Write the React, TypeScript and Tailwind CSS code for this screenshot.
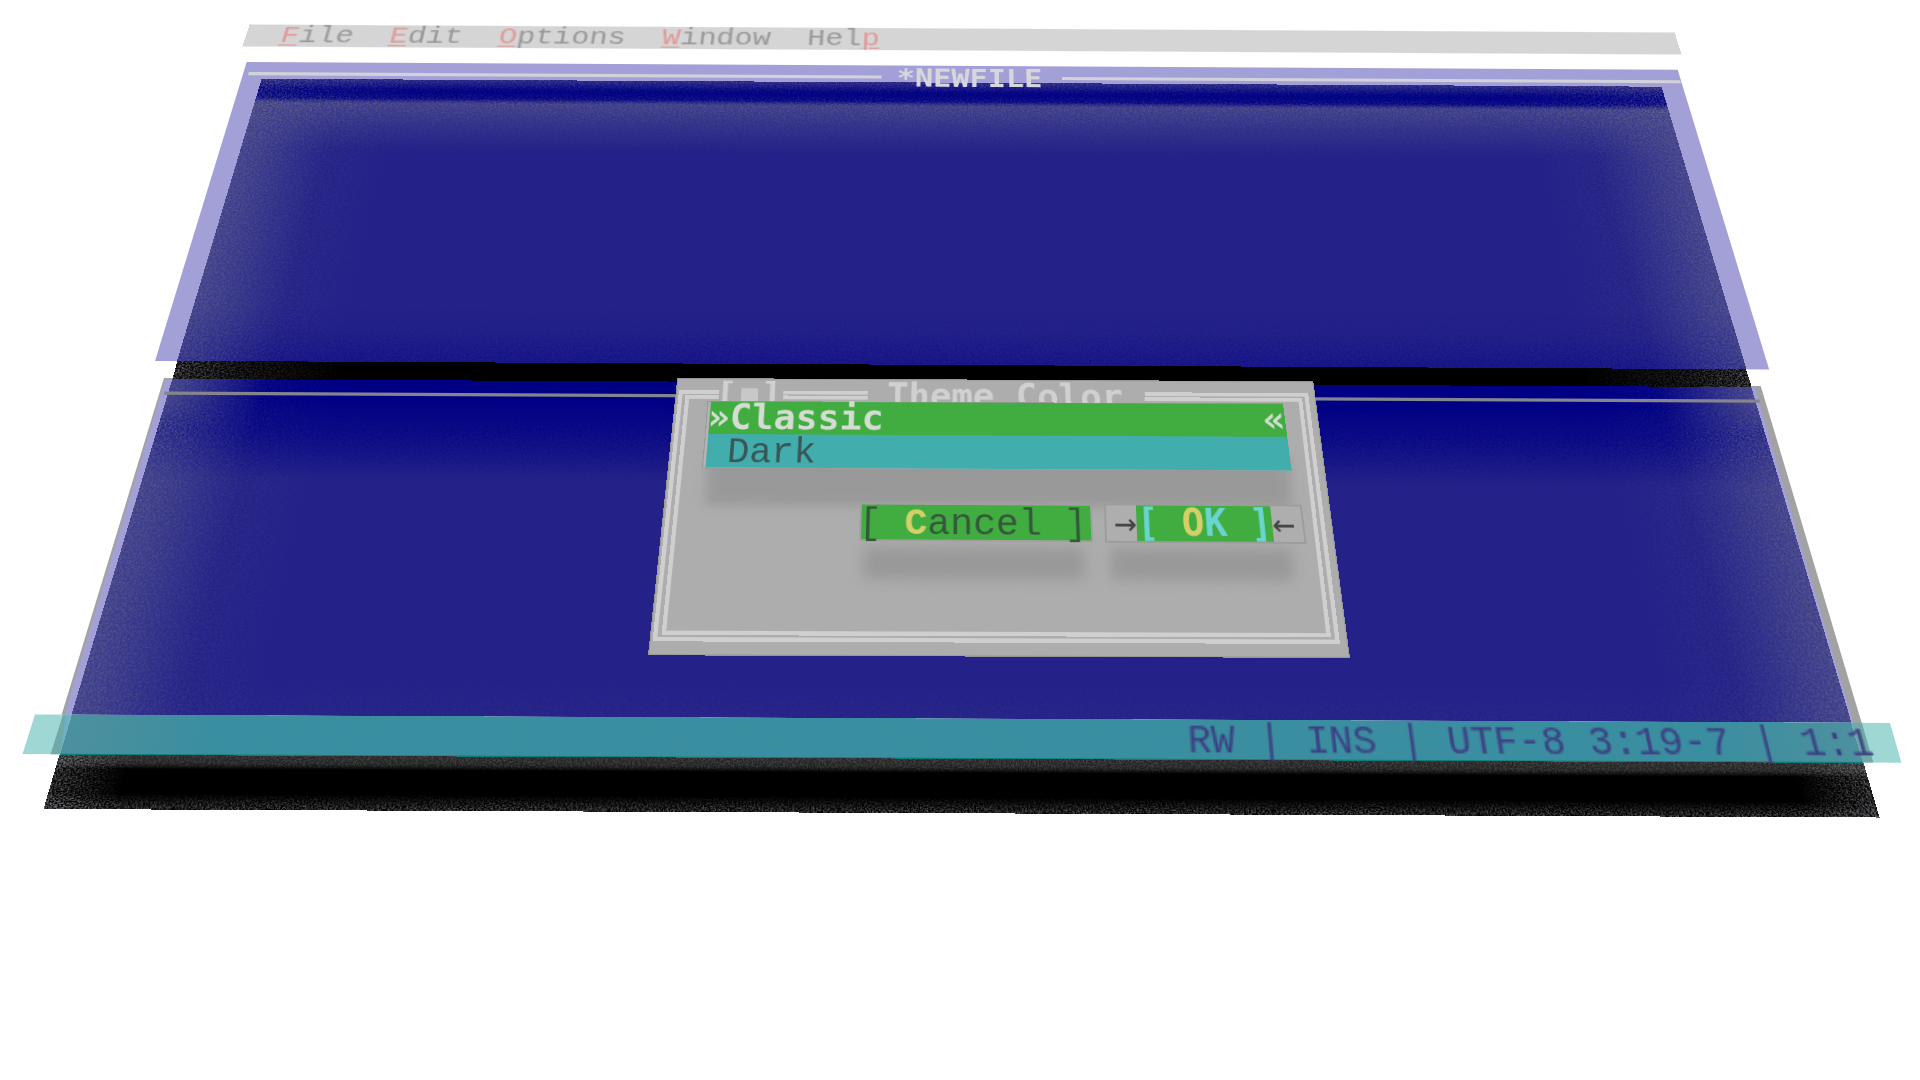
import type { ReactNode } from "react";

type Point = [number, number];
type Quad = [Point, Point, Point, Point];

/** Projective transform that carries a w×h box onto a quad (TL, TR, BR, BL). */
function project(w: number, h: number, quad: Quad): string {
  const [[x0, y0], [x1, y1], [x2, y2], [x3, y3]] = quad;
  const dx1 = x1 - x2, dx2 = x3 - x2, dx3 = x0 - x1 + x2 - x3;
  const dy1 = y1 - y2, dy2 = y3 - y2, dy3 = y0 - y1 + y2 - y3;
  const den = dx1 * dy2 - dx2 * dy1;
  const g = (dx3 * dy2 - dx2 * dy3) / den;
  const k = (dx1 * dy3 - dx3 * dy1) / den;
  const a = x1 - x0 + g * x1, b = x3 - x0 + k * x3;
  const d = y1 - y0 + g * y1, e = y3 - y0 + k * y3;
  const m = [a / w, d / w, 0, g / w, b / h, e / h, 0, k / h, 0, 0, 1, 0, x0, y0, 0, 1];
  return `matrix3d(${m.map((n) => n.toFixed(10)).join(",")})`;
}

interface PlaneProps {
  w: number;
  h: number;
  quad: Quad;
  className?: string;
  children?: ReactNode;
}

function Plane({ w, h, quad, className = "", children }: PlaneProps) {
  return (
    <div
      className={`absolute left-0 top-0 origin-top-left ${className}`}
      style={{ width: w, height: h, transform: project(w, h, quad) }}
    >
      {children}
    </div>
  );
}

function Grain({ className = "", dark = false }: { className?: string; dark?: boolean }) {
  return (
    <svg className={`absolute inset-0 h-full w-full ${className}`} aria-hidden="true">
      <rect width="100%" height="100%" filter={dark ? "url(#grain-dark)" : "url(#grain-light)"} />
    </svg>
  );
}

function GrainFilters() {
  return (
    <svg className="absolute h-0 w-0" aria-hidden="true">
      <filter id="grain-light" x="0" y="0" width="100%" height="100%" colorInterpolationFilters="sRGB">
        <feTurbulence type="fractalNoise" baseFrequency="0.6" numOctaves="2" seed="4" />
        <feColorMatrix values="0 0 0 0 0.5  0 0 0 0 0.5  0 0 0 0 0.52  3.5 0 0 0 -1.4" />
      </filter>
      <filter id="grain-dark" x="0" y="0" width="100%" height="100%" colorInterpolationFilters="sRGB">
        <feTurbulence type="fractalNoise" baseFrequency="0.6" numOctaves="2" seed="9" />
        <feColorMatrix values="0 0 0 0 0  0 0 0 0 0  0 0 0 0 0.52  3.5 0 0 0 -1.4" />
      </filter>
    </svg>
  );
}

const SIDES =
  "[mask-image:linear-gradient(90deg,#000_0%,rgba(0,0,0,0.45)_4%,transparent_11%,transparent_89%,rgba(0,0,0,0.45)_96%,#000_100%)]";

function Hot({ children }: { children: ReactNode }) {
  return <span className="text-[#e09a9a] underline decoration-1 underline-offset-[2px]">{children}</span>;
}

function MenuBar() {
  return (
    <Plane
      w={947}
      h={19}
      quad={[[249.5, 24.5], [1674.5, 32.5], [1681.5, 54.5], [242.5, 46.5]]}
      className="flex gap-6 bg-[#d5d5d5] pl-[23px] font-['Liberation_Mono',monospace] leading-[20px] text-[#999999]"
    >
      <span><Hot>F</Hot>ile</span>
      <span><Hot>E</Hot>dit</span>
      <span><Hot>O</Hot>ptions</span>
      <span><Hot>W</Hot>indow</span>
      <span>Hel<Hot>p</Hot></span>
    </Plane>
  );
}

function EditorTop() {
  return (
    <>
      <Plane w={1500} h={300} quad={[[246.7, 62], [1677.5, 69.7], [1769, 369.5], [155, 361]]} className="bg-[#a2a0d7]" />
      <Plane
        w={1500}
        h={300}
        quad={[[261.7, 78.7], [1661.5, 86.7], [1746.5, 369.3], [177, 361]]}
        className="overflow-hidden bg-[#242288]"
      >
        <div className="absolute inset-x-0 bottom-0 h-8 bg-linear-to-b from-transparent to-[#1c1a88]" />
        <div className="absolute inset-x-0 top-6 h-14 bg-linear-to-b from-[#3c3c8e] to-transparent" />
        <div className="absolute inset-0 bg-[linear-gradient(90deg,#3e3e8f_0%,transparent_6%,transparent_94%,#3e3e8f_100%)]" />
        <div className="absolute inset-x-0 top-0 h-7 bg-[linear-gradient(180deg,#22228a_0%,#000084_40%,#000084_78%,transparent_100%)]" />
        <Grain className="opacity-40 [mask-image:linear-gradient(180deg,#000_0%,rgba(0,0,0,0.2)_5%,#000_9%,rgba(0,0,0,0.3)_18%,transparent_30%)]" />
        <Grain className={`opacity-40 ${SIDES}`} />
        <Grain dark className="opacity-40 [mask-image:linear-gradient(180deg,transparent_82%,#000_100%)]" />
      </Plane>
      <Plane w={633} h={3} quad={[[249, 72], [881.5, 75.5], [881.5, 78.5], [248, 75.2]]} className="bg-[#d2d2da]" />
      <Plane w={618} h={3} quad={[[1062, 77], [1680, 80.2], [1681, 83.2], [1062, 80]]} className="bg-[#d2d2da]" />
      <Plane
        w={96}
        h={19}
        quad={[[897, 67], [1042, 68], [1042.5, 91], [896.5, 90]]}
        className="font-bold leading-[19px] text-[#d6d6dc]"
      >
        *NEWFILE
      </Plane>
    </>
  );
}

function EditorBottom() {
  return (
    <>
      <Plane w={1500} h={300} quad={[[164, 378], [1760.5, 386], [1873, 761.5], [50, 753]]} className="bg-[#a2a2a2]" />
      <Plane w={1500} h={300} quad={[[165.5, 379], [1754.5, 387], [1864.5, 761.5], [53, 753]]} className="bg-[#a2a0d7]" />
      <Plane
        w={1600}
        h={330}
        quad={[[172.5, 378.5], [1751, 386.5], [1863, 761.5], [60, 753]]}
        className="overflow-hidden bg-[#242288]"
      >
        <div className="absolute inset-x-0 top-0 h-24 bg-[linear-gradient(180deg,#000084_0%,#000084_22%,transparent_100%)]" />
        <div className="absolute inset-0 bg-[linear-gradient(90deg,#3e3e8f_0%,transparent_6%,transparent_94%,#3e3e8f_100%)]" />
        <Grain className={`opacity-40 ${SIDES}`} />
        <Grain dark className="opacity-60 [mask-image:linear-gradient(180deg,transparent_5%,#000_15%,transparent_30%)]" />
        <Grain className="opacity-15 [mask-image:linear-gradient(180deg,transparent_80%,#000_100%)]" />
      </Plane>
      <Plane w={1594} h={3} quad={[[164.5, 391.5], [1759, 399.5], [1759.5, 402.7], [164, 394.7]]} className="bg-[#85858f]" />
    </>
  );
}

function Backdrop() {
  return (
    <>
      <Plane
        w={1570}
        h={24}
        quad={[[177.5, 360.8], [1746, 369.2], [1751.5, 387], [172.5, 379]]}
        className="overflow-hidden bg-black"
      >
        <Grain className={`opacity-80 ${SIDES}`} />
      </Plane>
      <Plane
        w={1800}
        h={56}
        quad={[[60, 753], [1863, 761.5], [1879.5, 817.5], [43.5, 809]]}
        className="overflow-hidden bg-black"
      >
        <div className="absolute inset-x-0 top-0 h-4 bg-[linear-gradient(180deg,#242424_0%,#202020_60%,transparent_100%)]" />
        <Grain className="opacity-45 [mask-image:linear-gradient(180deg,#000_0%,rgba(0,0,0,0.7)_20%,transparent_28%)]" />
        <Grain className="opacity-70 [mask-image:linear-gradient(180deg,transparent_72%,rgba(0,0,0,0.9)_95%,#000_100%)]" />
        <Grain className="opacity-80 [mask-image:linear-gradient(90deg,#000_0%,transparent_4%,transparent_96%,#000_100%)]" />
      </Plane>
    </>
  );
}

function StatusBar() {
  return (
    <>
      <Plane w={1860} h={42} quad={[[35, 714.5], [1890, 723], [1901.5, 762.7], [22.5, 754]]} className="bg-[#9fd7d4]" />
      <Plane w={1820} h={42} quad={[[63, 714.7], [1862, 722.8], [1873.5, 762.5], [50.5, 754.2]]} className="bg-[#71a9a8]" />
      <Plane w={1800} h={42} quad={[[66, 714.7], [1853, 722.8], [1863, 762.5], [60, 754.2]]} className="bg-[#70b1c4]" />
      <Plane
        w={1800}
        h={42}
        quad={[[72, 714.6], [1851, 722.8], [1863, 762.9], [60, 754.7]]}
        className="overflow-hidden border-b border-[#107c78] bg-[#378fa1]"
      >
        <div className="absolute inset-0 bg-[linear-gradient(90deg,#4c91a0_0%,transparent_8%,transparent_92%,#4c91a0_100%)]" />
        <Grain className="opacity-10" />
      </Plane>
      <Plane
        w={948}
        h={19.5}
        quad={[[35, 714.5], [1890, 723], [1901.5, 762.7], [22.5, 754]]}
        className="flex justify-end pr-3 font-['Liberation_Mono',monospace] leading-[21px] text-[#3b3f82]"
      >
        RW | INS | UTF-8 3:19-7 | 1:1
      </Plane>
    </>
  );
}

function Dialog() {
  return (
    <>
      <Plane
        w={640}
        h={280}
        quad={[[677.3, 378], [1313.3, 381.3], [1350, 658], [648, 655.3]]}
        className="border border-[#969696] bg-[#adadad]"
      />
      {/* double frame */}
      <Plane
        w={627}
        h={250}
        quad={[[679, 390.2], [1308, 393], [1340, 644], [652.5, 641.3]]}
        className="border-x-4 border-b-4 border-[#cfcfcf]"
      >
        <div className="absolute -inset-x-1 top-0 flex h-1">
          <div className="w-10 bg-[#cfcfcf]" />
          <div className="ml-[64px] w-[84px] bg-[#cfcfcf]" />
          <div className="ml-auto w-[163px] bg-[#cfcfcf]" />
        </div>
      </Plane>
      <Plane
        w={613}
        h={236}
        quad={[[685.5, 395], [1302, 398], [1331, 637.5], [661.5, 635]]}
        className="border-x-4 border-b-4 border-[#cfcfcf]"
      >
        <div className="absolute -inset-x-1 top-0 flex h-1">
          <div className="w-[33px] bg-[#cfcfcf]" />
          <div className="ml-[64px] w-[84px] bg-[#cfcfcf]" />
          <div className="ml-auto w-[157px] bg-[#cfcfcf]" />
        </div>
      </Plane>
      <Plane
        w={36}
        h={21}
        quad={[[716, 378.5], [783, 379], [782, 408], [714, 407.5]]}
        className="flex items-end justify-between font-bold leading-[22px] text-[#d0d0d0]"
      >
        <span>[</span>
        <span className="mb-[2px] h-3 w-[9px] bg-[#c8c8c8]" />
        <span>]</span>
      </Plane>
      <Plane
        w={132}
        h={19}
        quad={[[887.5, 380.5], [1122, 382], [1124, 413.5], [886.5, 412]]}
        className="font-bold leading-[19px] text-[#d0d0d0]"
      >
        Theme Color
      </Plane>

      {/* soft shadows cast by the floating controls */}
      <Plane w={600} h={50} quad={[[699, 465], [1298, 468], [1300, 512], [697, 509]]}>
        <div className="absolute inset-x-2 -top-3 bottom-1 bg-[#999999] blur-[6px]" />
      </Plane>
      <Plane w={240} h={40} quad={[[856, 543], [1092, 544], [1094, 584], [855, 583]]}>
        <div className="absolute inset-x-2 inset-y-1 bg-[#989898] blur-[7px]" />
      </Plane>
      <Plane w={204} h={40} quad={[[1103, 544], [1300, 545], [1302, 585], [1103, 584]]}>
        <div className="absolute inset-x-2 inset-y-1 bg-[#989898] blur-[7px]" />
      </Plane>

      <Plane
        w={586}
        h={70}
        quad={[[707.5, 401], [1283, 403.5], [1292, 471.5], [702, 468.5]]}
        className="border border-[#999999] bg-[#b4b4b4]"
      />
      <Plane
        w={312}
        h={38}
        quad={[[711, 401.5], [1283, 404], [1291.3, 470.5], [705.5, 467.3]]}
        className="flex flex-col"
      >
        <div className="flex h-[19px] justify-between bg-[#41ad41] font-bold leading-[19px] text-[#d5dcd3]">
          <span className="-ml-px">»Classic</span>
          <span>«</span>
        </div>
        <div className="h-[19px] bg-[#41adad] pl-[11px] font-['Liberation_Mono',monospace] leading-[22px] text-[#3b5555]">Dark</div>
      </Plane>

      <Plane
        w={120}
        h={19}
        quad={[[862, 504.5], [1090, 505.8], [1091.3, 540.4], [861, 539.2]]}
        className="bg-[#41ad41] font-['Liberation_Mono',monospace] leading-[22px] text-[#35573a] outline-1 outline-[#a0a0a0]"
      >
        <span className="relative -left-[1.5px]">
          {"[ "}
          <span className="font-bold text-[#d6ce67]">C</span>
          {"ancel ]"}
        </span>
      </Plane>
      <Plane
        w={104}
        h={19}
        quad={[[1106, 505.3], [1300, 506.5], [1304.5, 542], [1106.8, 540.8]]}
        className="flex justify-center bg-[#aeaeae] leading-[19px] text-[#444444] outline-[0.5px] outline-[#9c9c9c]"
      >
        <span>→</span>
        <span className="h-[19px] bg-[#41ad41] font-bold text-[#6ad4d1]">
          {"[ "}
          <span className="text-[#d6ce67]">O</span>
          {"K ]"}
        </span>
        <span>←</span>
      </Plane>
    </>
  );
}

export default function App() {
  return (
    <main className="relative h-[1080px] w-[1920px] overflow-hidden bg-white font-['DejaVu_Sans_Mono',monospace] text-[20px] tracking-[-0.04px] whitespace-pre">
      <GrainFilters />
      <MenuBar />
      <EditorTop />
      <EditorBottom />
      <Backdrop />
      <StatusBar />
      <Dialog />
    </main>
  );
}
